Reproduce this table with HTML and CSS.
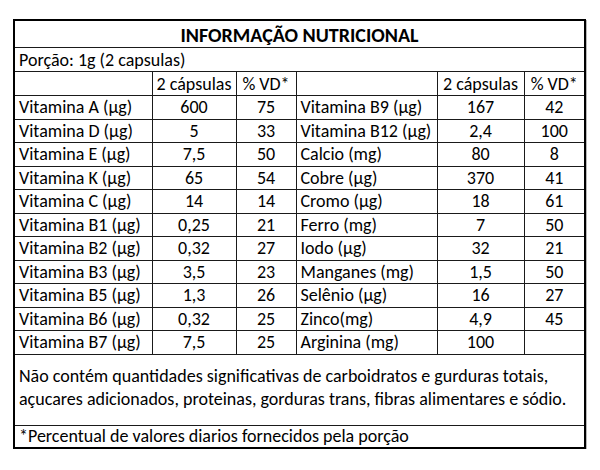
FILE: index.html
```html
<!DOCTYPE html>
<html lang="pt">
<head>
<meta charset="utf-8">
<link rel="stylesheet" href="styles.css">
</head>
<body>
<table class="nutri">
  <colgroup>
    <col class="c1"><col class="c2"><col class="c3"><col class="c4"><col class="c5"><col class="c6">
  </colgroup>
  <tr class="title"><th colspan="6">INFORMAÇÃO NUTRICIONAL</th></tr>
  <tr class="portion"><td colspan="6">Porção: 1g (2 capsulas)</td></tr>
  <tr class="head"><td></td><td class="num">2 cápsulas</td><td class="num">% VD*</td><td></td><td class="num">2 cápsulas</td><td class="num">% VD*</td></tr>
  <tr><td>Vitamina A (µg)</td><td class="num">600</td><td class="num">75</td><td>Vitamina B9 (µg)</td><td class="num">167</td><td class="num">42</td></tr>
  <tr><td>Vitamina D (µg)</td><td class="num">5</td><td class="num">33</td><td>Vitamina B12 (µg)</td><td class="num">2,4</td><td class="num">100</td></tr>
  <tr><td>Vitamina E (µg)</td><td class="num">7,5</td><td class="num">50</td><td>Calcio (mg)</td><td class="num">80</td><td class="num">8</td></tr>
  <tr><td>Vitamina K (µg)</td><td class="num">65</td><td class="num">54</td><td>Cobre (µg)</td><td class="num">370</td><td class="num">41</td></tr>
  <tr><td>Vitamina C (µg)</td><td class="num">14</td><td class="num">14</td><td>Cromo (µg)</td><td class="num">18</td><td class="num">61</td></tr>
  <tr><td>Vitamina B1 (µg)</td><td class="num">0,25</td><td class="num">21</td><td>Ferro (mg)</td><td class="num">7</td><td class="num">50</td></tr>
  <tr><td>Vitamina B2 (µg)</td><td class="num">0,32</td><td class="num">27</td><td>Iodo (µg)</td><td class="num">32</td><td class="num">21</td></tr>
  <tr><td>Vitamina B3 (µg)</td><td class="num">3,5</td><td class="num">23</td><td>Manganes (mg)</td><td class="num">1,5</td><td class="num">50</td></tr>
  <tr><td>Vitamina B5 (µg)</td><td class="num">1,3</td><td class="num">26</td><td>Selênio (µg)</td><td class="num">16</td><td class="num">27</td></tr>
  <tr><td>Vitamina B6 (µg)</td><td class="num">0,32</td><td class="num">25</td><td>Zinco(mg)</td><td class="num">4,9</td><td class="num">45</td></tr>
  <tr><td>Vitamina B7 (µg)</td><td class="num">7,5</td><td class="num">25</td><td>Arginina (mg)</td><td class="num">100</td><td class="num"></td></tr>
  <tr class="notes"><td colspan="6">Não contém quantidades significativas de carboidratos e gurduras totais,<br>açucares adicionados, proteinas, gorduras trans, fibras alimentares e sódio.</td></tr>
  <tr class="foot"><td colspan="6">*Percentual de valores diarios fornecidos pela porção</td></tr>
</table>
</body>
</html>
```

FILE: styles.css
```css
html, body {
  margin: 0;
  padding: 0;
  background: #ffffff;
}

body {
  padding: 19px 0 0 13px;
  font-family: Carlito, Calibri, Lato, "Liberation Sans", sans-serif;
  color: #000;
}

.nutri {
  border-collapse: collapse;
  table-layout: fixed;
  width: 571px;
  border: 2px solid #000;
  box-shadow: 1px 1px 0 #b8b8b8;
  font-size: 18px;
}

.c1 { width: 138px; }
.c2 { width: 84px; }
.c3 { width: 60px; }
.c4 { width: 141px; }
.c5 { width: 87px; }
.c6 { width: 61px; }

.nutri td,
.nutri th {
  border: 1px solid #1a1a1a;
  padding: 0 0 0 4px;
  height: 22.5px;
  line-height: 20px;
  white-space: nowrap;
  overflow: hidden;
  vertical-align: middle;
}

.nutri .num {
  text-align: center;
  padding: 0;
}

.title th {
  height: 25px;
  font-size: 20px;
  font-weight: bold;
  text-align: center;
  padding: 1px 0 0 0;
}

.portion td { height: 23px; }
.head td { height: 23px; }

.notes td {
  height: 67px;
  line-height: 23px;
  padding-bottom: 3px;
}

.foot td { height: 21px; }
```
